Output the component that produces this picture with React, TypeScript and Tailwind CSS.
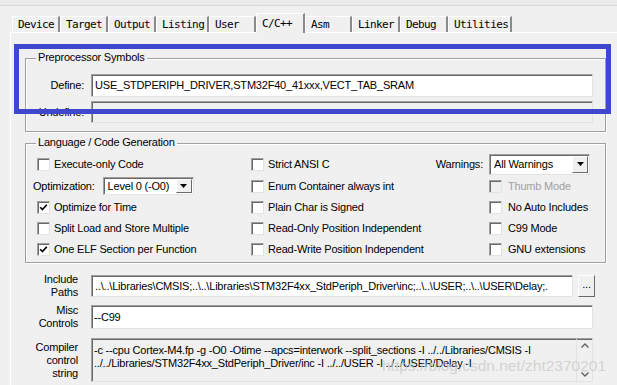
import React from 'react';

const tabs = [
  { name: 'Device', w: 48 },
  { name: 'Target', w: 48 },
  { name: 'Output', w: 48 },
  { name: 'Listing', w: 53 },
  { name: 'User', w: 47 },
  { name: 'C/C++', w: 49, active: true },
  { name: 'Asm', w: 47 },
  { name: 'Linker', w: 48 },
  { name: 'Debug', w: 48 },
  { name: 'Utilities', w: 64 },
];

const Check: React.FC<{ checked?: boolean; disabled?: boolean }> = ({ checked, disabled }) => (
  <span
    className={`w-[13px] h-[13px] shrink-0 flex items-center justify-center border border-[#a0a0a0] border-r-[#e3e3e3] border-b-[#e3e3e3] shadow-[inset_1px_1px_0_#696969] ${
      disabled ? 'bg-[#f0f0f0]' : 'bg-white'
    }`}
  >
    {checked && (
      <svg width="9" height="9" viewBox="0 0 9 9">
        <path d="M1.2 4.2 L3.4 6.6 L7.8 1.8" stroke="#000" strokeWidth="1.7" fill="none" />
      </svg>
    )}
  </span>
);

const CheckRow: React.FC<{ label: string; checked?: boolean; disabled?: boolean; gap?: string }> = ({
  label,
  checked,
  disabled,
  gap = 'gap-[4px]',
}) => (
  <div className={`flex items-center ${gap} ${disabled ? 'text-[#a0a0a0]' : 'text-black'}`}>
    <Check checked={checked} disabled={disabled} />
    <span className="whitespace-nowrap">{label}</span>
  </div>
);

const Arrow = () => (
  <svg width="7" height="4" viewBox="0 0 7 4">
    <path d="M0 0 H7 L3.5 4 Z" fill="#000" />
  </svg>
);

const Select: React.FC<{ value: string; className: string }> = ({ value, className }) => (
  <div
    className={`flex items-stretch bg-white border border-[#a0a0a0] border-r-[#e3e3e3] border-b-[#e3e3e3] shadow-[inset_1px_1px_0_#696969] pt-[1px] pl-[1px] pr-[1px] pb-[1px] ${className}`}
  >
    <span className="flex-1 pl-[3px] flex items-center whitespace-nowrap">{value}</span>
    <span className="w-[16px] bg-[#f0f0f0] border border-white border-r-[#696969] border-b-[#696969] flex items-center justify-center">
      <Arrow />
    </span>
  </div>
);

const sunken =
  'border border-[#a0a0a0] border-r-[#e3e3e3] border-b-[#e3e3e3] shadow-[inset_1px_1px_0_#696969]';
const etched = 'border border-[#a0a0a0] shadow-[inset_1px_1px_0_#ffffff,1px_1px_0_#ffffff]';

export default function App() {
  return (
    <div className="w-[617px] h-[385px] bg-[#f0f0f0] relative overflow-hidden font-['Liberation_Sans',Arial,sans-serif] text-[11px] tracking-[-0.2px] text-black leading-none">
      {/* window top strip */}
      <div className="h-[6px] bg-[#ebebeb] border-b border-[#d9d9d9]" />

      {/* tabs */}
      <div className="flex items-end pl-[12px] h-[26px] font-['DejaVu_Sans_Mono',monospace] text-[11px] tracking-[-0.6px]">
        {tabs.map((t) => (
          <div
            key={t.name}
            style={{ width: t.w }}
            className={`flex items-center pl-[5px] border-t border-l border-white border-r-2 border-r-[#8a8a8a] bg-[#f0f0f0] ${
              t.active ? 'h-[20px] relative top-[1px] z-10' : 'h-[16px]'
            }`}
          >
            {t.name}
          </div>
        ))}
      </div>

      {/* main panel */}
      <div className="ml-[10px] border-t border-l border-white h-[353px] flex flex-col">
        {/* Preprocessor Symbols */}
        <div className={`relative mt-[25px] ml-[14px] w-[581px] h-[74px] ${etched} pt-[15px] pr-[12px] flex flex-col gap-[4px]`}>
          <span className="absolute -top-[7px] left-[10px] px-[2px] bg-[#f0f0f0]">Preprocessor Symbols</span>
          <div className="flex items-center">
            <span className="w-[58px] text-right">Define:</span>
            <div className={`ml-[7px] flex-1 h-[23px] bg-white ${sunken} flex items-center pl-[3px] whitespace-nowrap`}>
              USE_STDPERIPH_DRIVER,STM32F40_41xxx,VECT_TAB_SRAM
            </div>
          </div>
          <div className="flex items-center">
            <span className="w-[58px] text-right">Undefine:</span>
            <div className={`ml-[7px] flex-1 h-[22px] bg-[#f0f0f0] ${sunken}`} />
          </div>
        </div>

        {/* Language / Code Generation */}
        <div className={`relative mt-[11px] ml-[14px] w-[581px] h-[120px] ${etched} pt-[9px] pl-[7px] flex`}>
          <span className="absolute -top-[7px] left-[10px] px-[2px] bg-[#f0f0f0]">Language / Code Generation</span>
          <div className="w-[218px] flex flex-col">
            <div className="h-[22px] flex items-center pl-[4px]">
              <CheckRow label="Execute-only Code" />
            </div>
            <div className="h-[22px] flex items-center gap-[8px]">
              <span>Optimization:</span>
              <Select value="Level 0 (-O0)" className="w-[91px] h-[18px]" />
            </div>
            <div className="h-[21px] flex items-center pl-[4px]">
              <CheckRow label="Optimize for Time" checked />
            </div>
            <div className="h-[21px] flex items-center pl-[4px]">
              <CheckRow label="Split Load and Store Multiple" />
            </div>
            <div className="h-[21px] flex items-center pl-[4px]">
              <CheckRow label="One ELF Section per Function" checked />
            </div>
          </div>
          <div className="w-[182px] flex flex-col">
            <div className="h-[22px] flex items-center">
              <CheckRow label="Strict ANSI C" />
            </div>
            <div className="h-[22px] flex items-center">
              <CheckRow label="Enum Container always int" />
            </div>
            <div className="h-[21px] flex items-center">
              <CheckRow label="Plain Char is Signed" />
            </div>
            <div className="h-[21px] flex items-center">
              <CheckRow label="Read-Only Position Independent" />
            </div>
            <div className="h-[21px] flex items-center">
              <CheckRow label="Read-Write Position Independent" />
            </div>
          </div>
          <div className="flex flex-col">
            <div className="h-[22px] flex items-center gap-[6px]">
              <span className="w-[50px] text-right">Warnings:</span>
              <Select value="All Warnings" className="w-[101px] h-[21px]" />
            </div>
            <div className="h-[22px] flex items-center pl-[56px]">
              <CheckRow label="Thumb Mode" disabled gap="gap-[6px]" />
            </div>
            <div className="h-[21px] flex items-center pl-[56px]">
              <CheckRow label="No Auto Includes" gap="gap-[6px]" />
            </div>
            <div className="h-[21px] flex items-center pl-[56px]">
              <CheckRow label="C99 Mode" gap="gap-[6px]" />
            </div>
            <div className="h-[21px] flex items-center pl-[56px]">
              <CheckRow label="GNU extensions" gap="gap-[6px]" />
            </div>
          </div>
        </div>

        {/* Include Paths */}
        <div className="mt-[12px] flex items-center h-[22px]">
          <div className="w-[67px] text-right leading-[13px]">
            Include
            <br />
            Paths
          </div>
          <div className={`ml-[13px] w-[482px] h-[22px] bg-white ${sunken} flex items-center pl-[3px] overflow-hidden whitespace-nowrap`}>
            ..\..\Libraries\CMSIS;..\..\Libraries\STM32F4xx_StdPeriph_Driver\inc;..\..\USER;..\..\USER\Delay;.
          </div>
          <div className="ml-[5px] w-[17px] h-[22px] border border-white border-r-[#696969] border-b-[#696969] flex items-center justify-center pb-[3px]">
            ...
          </div>
        </div>

        {/* Misc Controls */}
        <div className="mt-[8px] flex items-center h-[24px]">
          <div className="w-[67px] text-right leading-[13px]">
            Misc
            <br />
            Controls
          </div>
          <div className={`ml-[13px] w-[502px] h-[24px] bg-white ${sunken} flex items-center pl-[2px]`}>--C99</div>
        </div>

        {/* Compiler control string */}
        <div className="mt-[9px] flex items-center h-[44px]">
          <div className="w-[67px] text-right leading-[13px]">
            Compiler
            <br />
            control
            <br />
            string
          </div>
          <div className={`ml-[13px] w-[502px] h-[44px] bg-[#f0f0f0] ${sunken} flex`}>
            <div className="flex-1 pl-[2px] pt-[5px] leading-[13px] whitespace-nowrap overflow-hidden">
              -c --cpu Cortex-M4.fp -g -O0 -Otime --apcs=interwork --split_sections -I ../../Libraries/CMSIS -I
              <br />
              ../../Libraries/STM32F4xx_StdPeriph_Driver/inc -I ../../USER -I ../../USER/Delay -I
            </div>
            <div className="w-[16px] border-l border-[#e3e3e3] flex flex-col items-center justify-between py-[4px]">
              <svg width="8" height="5" viewBox="0 0 8 5">
                <path d="M0.5 4.5 L4 1 L7.5 4.5" stroke="#606060" strokeWidth="1.4" fill="none" />
              </svg>
              <svg width="8" height="5" viewBox="0 0 8 5">
                <path d="M0.5 0.5 L4 4 L7.5 0.5" stroke="#606060" strokeWidth="1.4" fill="none" />
              </svg>
            </div>
          </div>
        </div>
      </div>

      {/* annotation rectangle */}
      <div className="absolute left-[14px] top-[44px] w-[597px] h-[70px] border-[5px] border-[#3f48cc] pointer-events-none" />

      {/* watermark */}
      <div className="absolute left-[382px] top-[358px] text-[15.5px] tracking-[0px] leading-none text-[rgba(200,200,200,0.75)] font-['Liberation_Sans',Arial,sans-serif] pointer-events-none whitespace-nowrap">
        https://blog.csdn.net/zht2370201
      </div>
    </div>
  );
}
